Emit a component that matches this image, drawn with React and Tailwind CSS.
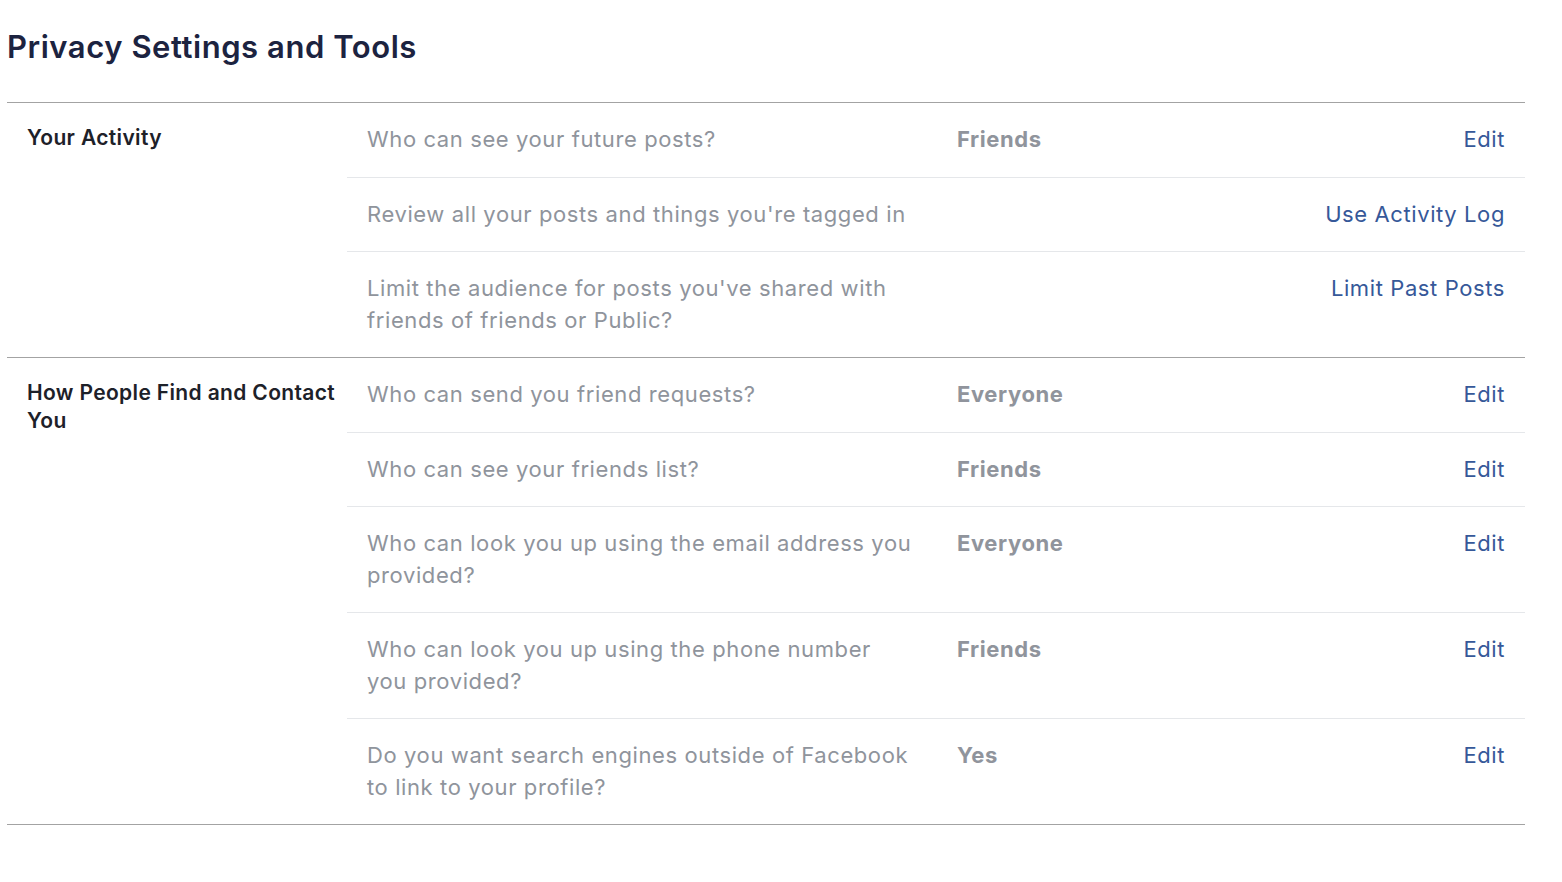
const sections = [
  {
    title: "Your Activity",
    rows: [
      { q: "Who can see your future posts?", value: "Friends", action: "Edit" },
      { q: "Review all your posts and things you're tagged in", value: "", action: "Use Activity Log" },
      { q: "Limit the audience for posts you've shared with friends of friends or Public?", value: "", action: "Limit Past Posts" },
    ],
  },
  {
    title: "How People Find and Contact You",
    rows: [
      { q: "Who can send you friend requests?", value: "Everyone", action: "Edit" },
      { q: "Who can see your friends list?", value: "Friends", action: "Edit" },
      { q: "Who can look you up using the email address you provided?", value: "Everyone", action: "Edit" },
      { q: "Who can look you up using the phone number you provided?", value: "Friends", action: "Edit" },
      { q: "Do you want search engines outside of Facebook to link to your profile?", value: "Yes", action: "Edit" },
    ],
  },
];

export default function App() {
  return (
    <div className="min-h-screen bg-white pl-[7px] pr-[37px] font-['Inter',sans-serif]">
      <h1 className="pt-[28px] pb-[36px] text-[31px] leading-[38px] font-semibold text-[#1c2340] tracking-[0.55px]">
        Privacy Settings and Tools
      </h1>

      <div className="border-t-[1.5px] border-[#a3a3a3]">
        {sections.map((sec) => (
          <div key={sec.title} className="flex border-b-[1.5px] border-[#a3a3a3]">
            <h2 className="w-[340px] shrink-0 pl-5 pr-1 pt-[21px] text-[21px] leading-[28px] font-semibold text-[#1d2129] tracking-[0.35px]">
              {sec.title}
            </h2>
            <ul className="flex-1 divide-y divide-[#e5e7ea]">
              {sec.rows.map((row) => (
                <li key={row.q} className="flex items-start px-5 py-[21px] text-[22px] leading-[31.5px] tracking-[0.6px]">
                  <span className="w-[550px] shrink-0 text-[#8f949c]">{row.q}</span>
                  <span className="ml-10 flex-1 font-bold text-[#90949c]">{row.value}</span>
                  <a href="#" className="text-[#365899] whitespace-nowrap">{row.action}</a>
                </li>
              ))}
            </ul>
          </div>
        ))}
      </div>
    </div>
  );
}
